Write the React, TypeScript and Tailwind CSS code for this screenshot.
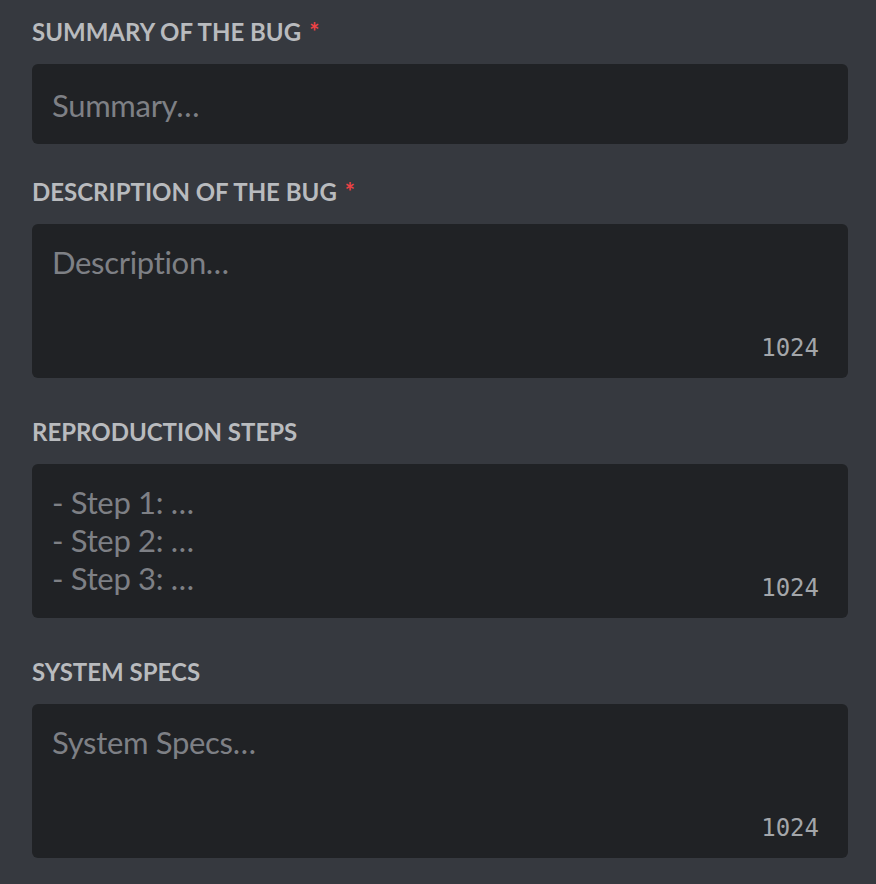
import { FC, ReactNode } from 'react';

const Label: FC<{ text: string; required?: boolean }> = ({ text, required }) => (
  <div className="h-[32px] mb-[16px] text-[24px] leading-[32px] font-bold uppercase text-[#b9bbbe] font-['Lato',sans-serif]">
    {text}
    {required && <span className="pl-[8px] text-[#ed4245]">*</span>}
  </div>
);

const Box: FC<{ tall?: boolean; children: ReactNode }> = ({ tall, children }) => (
  <div
    className={`relative rounded-[6px] bg-[#202225] px-[20px] text-[31px] tracking-[-0.01em] text-[#7e8085] font-['Lato',sans-serif] ${
      tall ? 'h-[154px] pt-[19px] leading-[38px]' : 'h-[80px] pt-[21px] leading-[40px]'
    }`}
  >
    {children}
    {tall && (
      <span className="absolute right-[29px] bottom-[16px] text-[24px] leading-[28px] tracking-normal text-[#a3a6aa] font-['DejaVu_Sans_Mono',monospace]">
        1024
      </span>
    )}
  </div>
);

export default function App() {
  return (
    <div className="min-h-screen bg-[#36393f] pl-8 pr-[28px] pt-[16px]">
      <Label text="Summary of the bug" required />
      <Box>Summary…</Box>

      <div className="mt-[32px]">
        <Label text="Description of the bug" required />
        <Box tall>Description…</Box>
      </div>

      <div className="mt-[38px]">
        <Label text="Reproduction steps" />
        <Box tall>
          <div>- Step 1: …</div>
          <div>- Step 2: …</div>
          <div>- Step 3: …</div>
        </Box>
      </div>

      <div className="mt-[38px]">
        <Label text="System specs" />
        <Box tall>System Specs…</Box>
      </div>
    </div>
  );
}
